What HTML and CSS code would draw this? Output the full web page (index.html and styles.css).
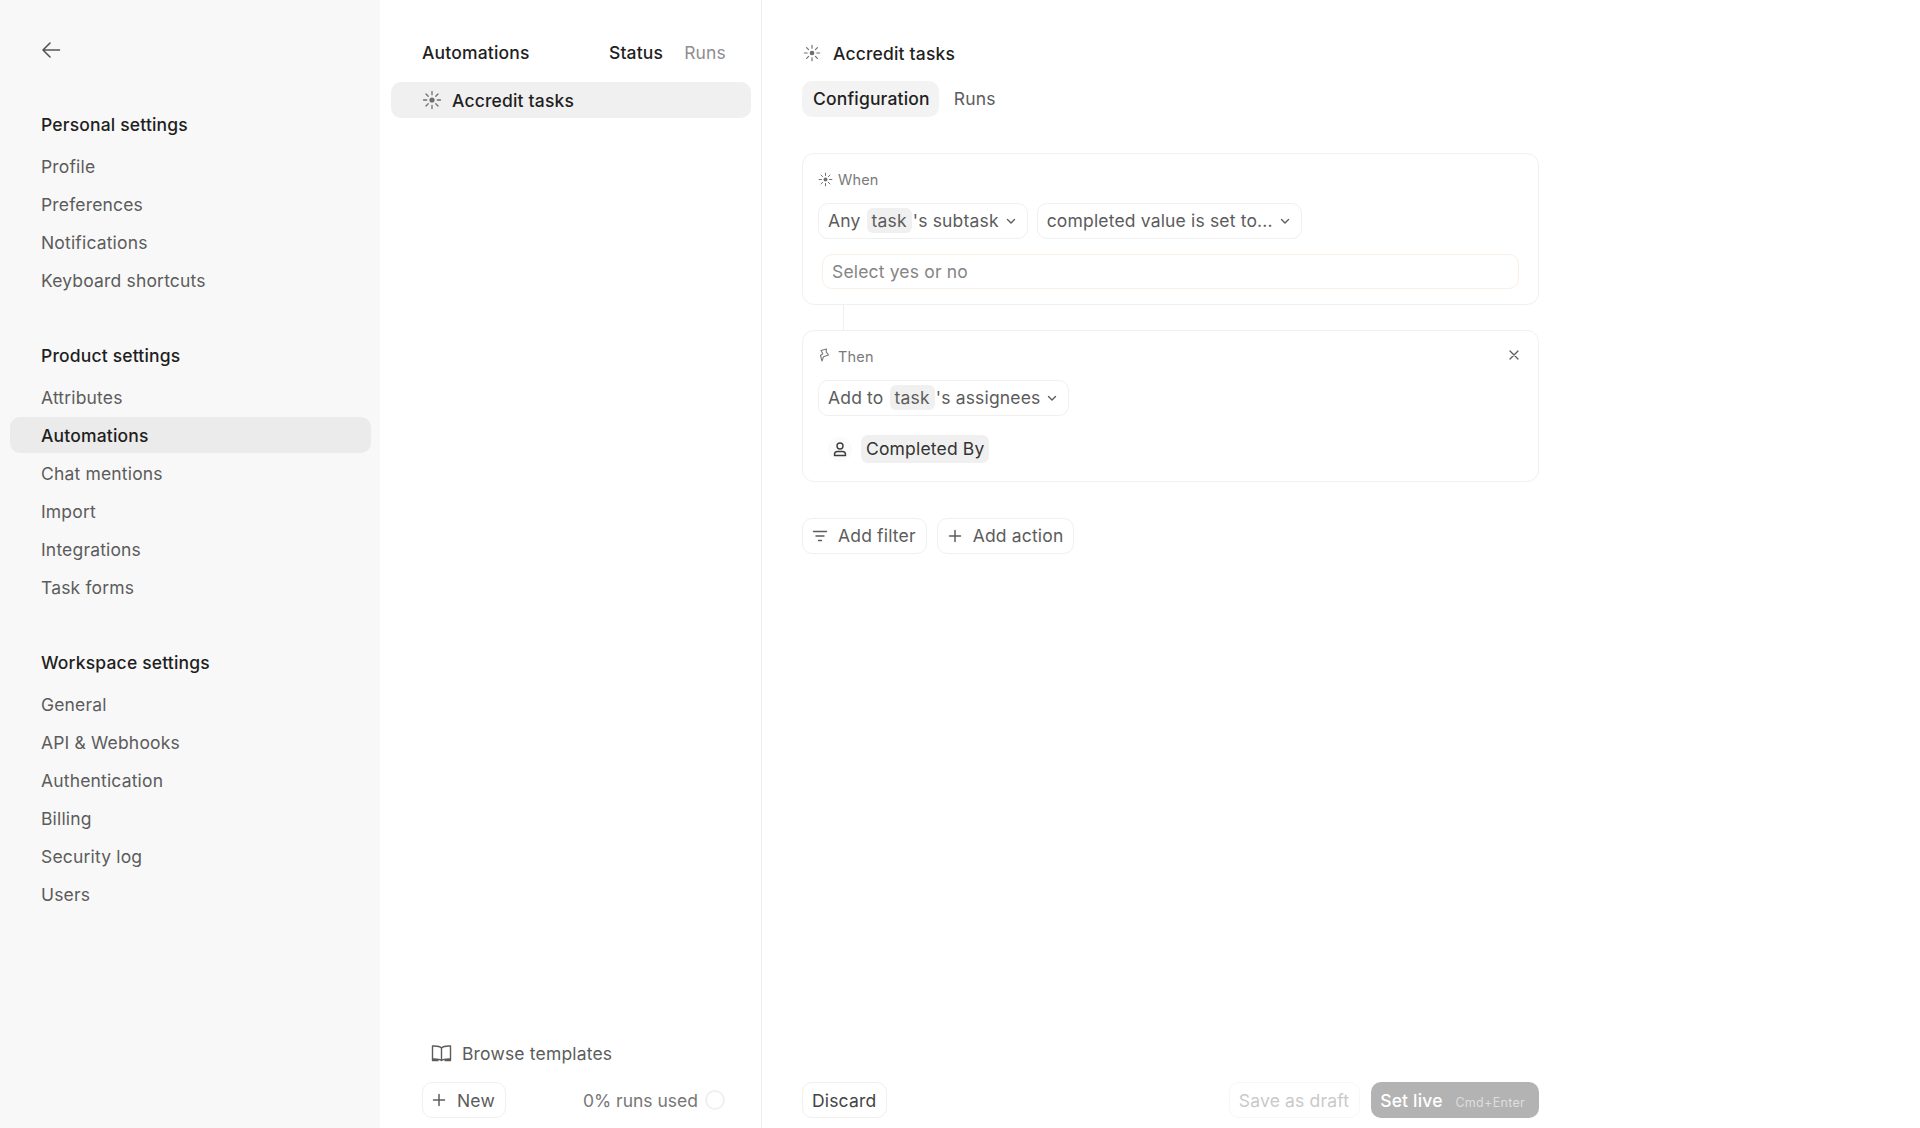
FILE: index.html
```html
<!DOCTYPE html>
<html lang="en">
<head>
<meta charset="utf-8">
<title>Automations</title>
<link rel="stylesheet" href="styles.css">
</head>
<body>
<svg class="defs" width="0" height="0" aria-hidden="true">
  <defs>
    <symbol id="sun" viewBox="0 0 20 20">
      <circle cx="10" cy="10" r="2.6" fill="currentColor"/>
      <path d="M10 1.5v3.2M10 15.3v3.2M1.5 10h3.2M15.3 10h3.2M4 4l2.2 2.2M13.8 13.8 16 16M4 16l2.2-2.2M13.8 6.2 16 4" fill="none" stroke="currentColor" stroke-width="1.3" stroke-linecap="round"/>
    </symbol>
    <symbol id="chev" viewBox="0 0 12 12">
      <path d="M2.5 4.5 6 8l3.5-3.5" fill="none" stroke="currentColor" stroke-width="1.4" stroke-linecap="round" stroke-linejoin="round"/>
    </symbol>
    <symbol id="plus" viewBox="0 0 16 16">
      <path d="M8 2.5v11M2.5 8h11" fill="none" stroke="currentColor" stroke-width="1.5" stroke-linecap="round"/>
    </symbol>
  </defs>
</svg>
<div class="app">
  <nav class="side">
    <a class="back" aria-label="Back">
      <svg width="20" height="18" viewBox="0 0 20 18"><path d="M18.5 9H2M9 2 2 9l7 7" fill="none" stroke="currentColor" stroke-width="1.6" stroke-linecap="round" stroke-linejoin="round"/></svg>
    </a>
    <section class="group">
      <h3>Personal settings</h3>
      <a>Profile</a><a>Preferences</a><a>Notifications</a><a>Keyboard shortcuts</a>
    </section>
    <section class="group">
      <h3>Product settings</h3>
      <a>Attributes</a><a class="on">Automations</a><a>Chat mentions</a><a>Import</a><a>Integrations</a><a>Task forms</a>
    </section>
    <section class="group">
      <h3>Workspace settings</h3>
      <a>General</a><a>API &amp; Webhooks</a><a>Authentication</a><a>Billing</a><a>Security log</a><a>Users</a>
    </section>
  </nav>

  <section class="list">
    <header class="list-head">
      <span class="grow dark">Automations</span>
      <span class="dark">Status</span>
      <span class="faint">Runs</span>
    </header>
    <div class="row">
      <svg class="ic-sun" width="20" height="20"><use href="#sun"/></svg>
      <span>Accredit tasks</span>
    </div>
    <div class="grow"></div>
    <a class="browse">
      <svg width="21" height="18" viewBox="0 0 21 18"><path d="M10.5 4C9 2.3 6 1.8 1.5 2v13c4.500-.2 7.500.2 9 1.500 1.500-1.300 4.500-1.700 9-1.500V2C15 1.800 12 2.300 10.500 4Zm0 0v12.500M1.500 15v1.500h6M19.500 15v1.500h-6" fill="none" stroke="currentColor" stroke-width="1.400" stroke-linejoin="round"/></svg>
      <span>Browse templates</span>
    </a>
    <footer class="list-foot">
      <button class="btn new"><svg width="16" height="16"><use href="#plus"/></svg>New</button>
      <span class="usage">0% runs used</span>
      <span class="ring"></span>
    </footer>
  </section>

  <main class="detail">
    <div class="column">
      <header class="title">
        <svg class="ic-sun" width="18" height="18"><use href="#sun"/></svg>
        <span>Accredit tasks</span>
      </header>
      <div class="tabs">
        <span class="tab active">Configuration</span>
        <span class="tab">Runs</span>
      </div>

      <div class="card when">
        <div class="label">
          <svg class="ic-sun" width="15" height="15"><use href="#sun"/></svg>
          <span>When</span>
        </div>
        <div class="selects">
          <button class="btn sel"><span>Any <em class="tok">task</em>'s subtask</span><svg width="12" height="12"><use href="#chev"/></svg></button>
          <button class="btn sel"><span>completed value is set to...</span><svg width="12" height="12"><use href="#chev"/></svg></button>
        </div>
        <div class="input">Select yes or no</div>
      </div>
      <div class="link"></div>
      <div class="card then">
        <div class="label">
          <svg class="ic-bolt" width="13" height="14" viewBox="0 0 13 14"><path d="M8.500 1 3 2.500l1.800 3.300L2.500 7.500l1.500 5.500 1.500-4.300 5-1.700-2.300-3.100L8.500 1Z" fill="none" stroke="currentColor" stroke-width="1.100" stroke-linejoin="round"/></svg>
          <span>Then</span>
          <svg class="close" width="12" height="12" viewBox="0 0 12 12"><path d="m2 2 8 8M10 2l-8 8" fill="none" stroke="currentColor" stroke-width="1.300" stroke-linecap="round"/></svg>
        </div>
        <div class="selects">
          <button class="btn sel"><span>Add to <em class="tok">task</em>'s assignees</span><svg width="12" height="12"><use href="#chev"/></svg></button>
        </div>
        <div class="assignee">
          <span class="avatar"><svg width="16" height="16" viewBox="0 0 16 16"><circle cx="8" cy="5" r="3" fill="none" stroke="currentColor" stroke-width="1.400"/><path d="M2.500 14.500v-1c0-2 1.500-3 3-3h5c1.500 0 3 1 3 3v1Z" fill="none" stroke="currentColor" stroke-width="1.400" stroke-linejoin="round"/></svg></span>
          <span class="chip">Completed By</span>
        </div>
      </div>

      <div class="adders">
        <button class="btn"><svg width="16" height="16" viewBox="0 0 16 16"><path d="M1.500 3.500h13M4 8h8M6.500 12.500h3" fill="none" stroke="currentColor" stroke-width="1.400" stroke-linecap="round"/></svg>Add filter</button>
        <button class="btn"><svg width="16" height="16"><use href="#plus"/></svg>Add action</button>
      </div>

      <div class="grow"></div>

      <footer class="actions">
        <button class="btn plain">Discard</button>
        <span class="grow"></span>
        <button class="btn draft">Save as draft</button>
        <button class="live">Set live <small>Cmd+Enter</small></button>
      </footer>
    </div>
  </main>
</div>
</body>
</html>
```
FILE: styles.css
```css
* { box-sizing: border-box; }
html, body { margin: 0; height: 100%; }
body {
  font-family: Inter, "Liberation Sans", sans-serif;
  font-size: 17.5px;
  letter-spacing: .17px;
  color: #5c5c5c;
  background: #fff;
  -webkit-font-smoothing: antialiased;
}
.defs { position: absolute; }
.app { display: flex; height: 1128px; overflow: hidden; }
.grow { flex: 1 1 auto; }
.dark { color: #1f1f1f; }
.faint { color: #8e8e8e; }
button { font: inherit; color: inherit; letter-spacing: inherit; }

/* settings nav */
.side {
  width: 380px;
  flex: none;
  background: #f8f8f8;
  padding: 41px 9px 0 10px;
}
.back { display: block; height: 20px; padding-left: 31px; margin-bottom: 51px; color: #555; line-height: 0; }
.group { margin-bottom: 45px; }
.group h3 {
  margin: 0 0 12px;
  padding-left: 31px;
  height: 24px;
  line-height: 26px;
  font-size: inherit;
  font-weight: 500;
  color: #1f1f1f;
}
.group a {
  display: block;
  height: 36px;
  line-height: 38px;
  margin-bottom: 2px;
  padding-left: 31px;
  border-radius: 10px;
}
.group a.on { background: #ebebeb; color: #1f1f1f; font-weight: 500; }

/* automations list */
.list {
  width: 382px;
  flex: none;
  border-right: 1px solid #efefef;
  display: flex;
  flex-direction: column;
  padding: 0 10px 10px 11px;
}
.list-head {
  display: flex;
  gap: 21px;
  height: 82px;
  padding: 41px 25px 0 31px;
  line-height: 24px;
}
.list-head .dark { font-weight: 500; }
.list-head .faint { font-weight: 400; }
.row {
  display: flex;
  align-items: center;
  gap: 10px;
  height: 36px;
  padding-left: 31px;
  background: #f0f0f0;
  border-radius: 10px;
  color: #1f1f1f;
  font-weight: 500;
}
.ic-sun { color: #6f6f6f; flex: none; }
.browse { display: flex; align-items: center; gap: 10px; height: 24px; margin: 0 0 17px 40px; }
.list-foot { display: flex; align-items: center; padding: 0 26px 0 31px; }
.usage { margin-left: auto; color: #777; letter-spacing: 0; }
.ring { width: 20px; height: 20px; margin-left: 7px; border: 2px solid #f0f0f0; border-radius: 50%; }

/* buttons */
.btn {
  display: inline-flex;
  align-items: center;
  gap: 10px;
  height: 36px;
  padding: 0 10px 0 9px;
  background: #fff;
  border: 1px solid #f0f0f0;
  border-radius: 10px;
  white-space: nowrap;
}
.btn.new { padding-left: 8px; }
.btn svg { flex: none; }

/* detail */
.detail { flex: 1 1 auto; padding: 0 0 10px 41px; display: flex; margin-left: -1px; }
.column { width: 737px; display: flex; flex-direction: column; }
.title { display: flex; align-items: center; gap: 12px; height: 24px; margin-top: 41px; padding-left: 1px; color: #1f1f1f; font-weight: 500; }
.tabs { display: flex; gap: 5px; margin-top: 16px; margin-bottom: 36px; }
.tab { height: 36px; line-height: 36px; padding: 0 10px; border-radius: 10px; }
.tab.active { background: #f3f3f3; color: #1f1f1f; font-weight: 500; padding: 0 9px 0 11px; }

.card { border: 1px solid #f0f0f0; border-radius: 12px; padding: 0 14px 0 15px; }
.when { height: 152px; }
.then { height: 152px; }
.link { width: 1px; height: 25px; margin-left: 41px; background: #efefef; }
.label { display: flex; align-items: center; gap: 5px; height: 20px; margin-top: 15px; font-size: 14.5px; color: #7a7a7a; position: relative; }
.label + .selects { margin-top: 14px; }
.label .close { position: absolute; right: 4px; top: 3px; color: #5c5c5c; }
.ic-bolt { color: #7a7a7a; margin-right: 2px; margin-bottom: 3px; }
.selects { display: flex; gap: 9px; }
.sel { gap: 6px; padding-bottom: 1px; }
.tok { font-style: normal; background: #f0f0f0; border-radius: 6px; padding: 2px 5px; margin-left: 1px; margin-right: 1px; }
.input {
  height: 35px;
  line-height: 33px;
  margin: 15px 5px 0 4px;
  padding-left: 9px;
  border: 1px solid #f8efe6;
  border-radius: 10px;
  color: #858585;
}
.assignee { display: flex; align-items: center; gap: 9px; margin-top: 19px; padding-left: 10px; }
.avatar { width: 24px; height: 24px; border-radius: 50%; background: #fafafa; color: #3d3d3d; display: flex; align-items: center; justify-content: center; line-height: 0; }
.chip { height: 28px; line-height: 28px; padding: 0 5px; background: #f0f0f0; border-radius: 7px; color: #333; }

.adders { display: flex; gap: 10px; margin-top: 36px; }
.adders .btn { padding-bottom: 1px; }

.actions { display: flex; align-items: center; gap: 11px; }
.plain { color: #444; }
.draft { color: #c9c9c9; border-color: #f7f7f7; }
.live {
  height: 36px;
  padding: 0 14px 0 9px;
  background: #b3b3b3;
  border: 0;
  border-radius: 10px;
  color: #fff;
  font-weight: 500;
  white-space: nowrap;
}
.live small { font-size: 12.5px; font-weight: 400; color: #dedede; margin-left: 8px; letter-spacing: .3px; }
```
